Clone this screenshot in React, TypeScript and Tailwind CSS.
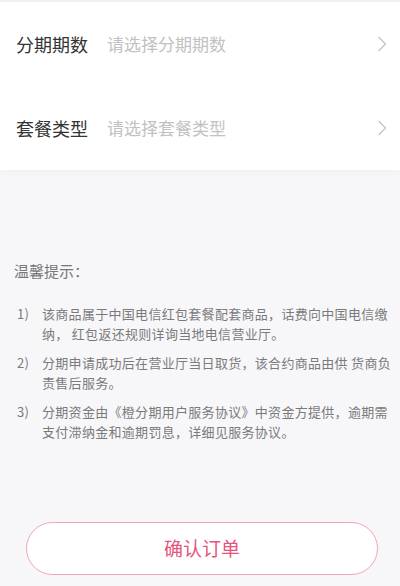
const Chevron = () => (
  <svg width="12" height="16" viewBox="0 0 12 16" fill="none" className="shrink-0">
    <path d="M3 1.5 L9.5 8 L3 14.5" stroke="#c4c4c4" strokeWidth="1.3" strokeLinecap="round" strokeLinejoin="round" />
  </svg>
);

const rows = [
  { label: "分期期数", placeholder: "请选择分期期数" },
  { label: "套餐类型", placeholder: "请选择套餐类型" },
];

const tips = [
  ["该商品属于中国电信红包套餐配套商品，话费向中国电信缴", "纳， 红包返还规则详询当地电信营业厅。"],
  ["分期申请成功后在营业厅当日取货，该合约商品由供 货商负", "责售后服务。"],
  ["分期资金由《橙分期用户服务协议》中资金方提供，逾期需", "支付滞纳金和逾期罚息，详细见服务协议。"],
];

export default function App() {
  return (
    <div
      className="w-[400px] h-[586px] overflow-hidden bg-[#f7f7fa] flex flex-col"
      style={{ fontFamily: '"Noto Sans CJK SC", "Noto Sans", sans-serif' }}
    >
      <div className="bg-white border-t-2 border-[#f0f0f2] shadow-[0_2px_6px_rgba(0,0,0,0.03)]">
        {rows.map((row) => (
          <div key={row.label} className="h-[84px] flex items-center pl-4 pr-[12px]">
            <span className="text-[18px] text-[#333] w-[91px]">{row.label}</span>
            <span className="flex-1 text-[17px] text-[#c2c2c2]">{row.placeholder}</span>
            <Chevron />
          </div>
        ))}
      </div>

      <div className="pt-[90px] px-[14px]">
        <div className="text-[15px] text-[#777] leading-[22px]">温馨提示：</div>
        <div className="mt-[22px] flex flex-col gap-[10px]">
          {tips.map((lines, i) => (
            <div key={i} className="flex text-[13px] leading-[19.5px] text-[#7a7a7a] tracking-[0.3px]">
              <span className="w-[28px] pl-[3px] shrink-0">{i + 1})</span>
              <div className="whitespace-nowrap">
                {lines[0]}
                <br />
                {lines[1]}
              </div>
            </div>
          ))}
        </div>
      </div>

      <div className="mt-auto mb-[11px] px-[26px] pr-[22px]">
        <button className="w-full h-[53px] rounded-full border border-[#f0a3b9] bg-white text-[19px] text-[#e5557b] flex items-center justify-center">
          确认订单
        </button>
      </div>
    </div>
  );
}
